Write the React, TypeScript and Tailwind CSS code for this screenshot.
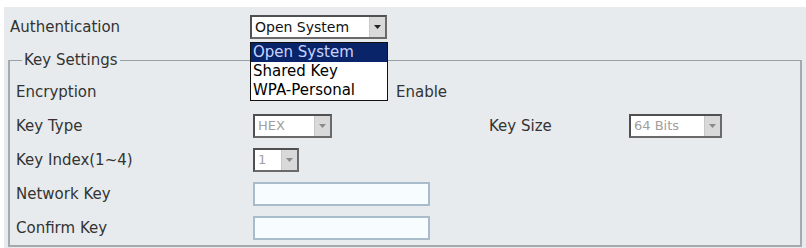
import React from 'react'

const font = { fontFamily: '"DejaVu Sans", Verdana, sans-serif' }

function Arrow({ disabled }: { disabled?: boolean }) {
  return (
    <span className="flex h-full w-[16px] items-center justify-center border-l border-[#c8c8c8] bg-[#d9d9d9]">
      <svg width="7" height="4" viewBox="0 0 7 4">
        <path d="M0 0h7L3.5 4z" fill={disabled ? '#8a8a8a' : '#222'} />
      </svg>
    </span>
  )
}

function Select({ value, width, disabled }: { value: string; width: string; disabled?: boolean }) {
  return (
    <div
      className={`flex h-[24px] items-stretch border-2 border-t-[#505050] border-l-[#505050] border-r-[#6a6a6a] border-b-[#6a6a6a] bg-white ${width}`}
    >
      <span className={`flex-1 truncate pl-[3px] leading-[20px] ${disabled ? 'text-[13px] text-[#a0a0a0]' : 'text-[14px] text-[#111]'}`}>
        {value}
      </span>
      <Arrow disabled={disabled} />
    </div>
  )
}

function TextBox() {
  return <div className="h-[24px] w-[177px] border-2 border-[#a9bccb] bg-[#f7fcff]" />
}

function Label({ children }: { children: React.ReactNode }) {
  return <span className="text-[15px] text-[#333]">{children}</span>
}

export default function App() {
  return (
    <div className="h-[248px] w-[806px] bg-white pl-[4px] pt-[7px]" style={font}>
      <div className="relative h-[241px] w-[802px] bg-[#e7ebed]">
        <div className="flex h-[40px] items-center">
          <span className="w-[246px] pl-[6px] text-[15px] text-[#333]">Authentication</span>
          <Select value="Open System" width="w-[137px]" />
        </div>

        <fieldset className="mx-[4px] mt-[5px] h-[195px] border-2 border-t border-[#a4aaae] border-t-[#9a9fa3] pl-[6px] pt-[6px]">
          <legend className="ml-[6px] px-[2px] text-[15px] leading-[17px] text-[#333]">Key Settings</legend>
          <div className="grid grid-cols-[237px_236px_140px_1fr] grid-rows-[34px_34px_34px_34px_34px] items-center">
            <Label>Encryption</Label>
            <div className="col-span-3 flex items-center gap-[8px]">
              <span className="ml-[122px] h-[13px] w-[13px] border border-[#777] bg-white" />
              <Label>Enable</Label>
            </div>

            <Label>Key Type</Label>
            <Select value="HEX" width="w-[79px]" disabled />
            <Label>Key Size</Label>
            <Select value="64 Bits" width="w-[93px]" disabled />

            <Label>Key Index(1~4)</Label>
            <div className="col-span-3">
              <Select value="1" width="w-[46px]" disabled />
            </div>

            <Label>Network Key</Label>
            <div className="col-span-3">
              <TextBox />
            </div>

            <Label>Confirm Key</Label>
            <div className="col-span-3">
              <TextBox />
            </div>
          </div>
        </fieldset>

        <div className="absolute left-[246px] top-[35px] w-[138px] border border-[#111] bg-white text-[15px] leading-[19px] text-black">
          <div className="bg-[#0a246a] pl-[2px] text-[#c8d4ff]">Open System</div>
          <div className="pl-[2px]">Shared Key</div>
          <div className="pl-[2px]">WPA-Personal</div>
        </div>
      </div>
    </div>
  )
}
